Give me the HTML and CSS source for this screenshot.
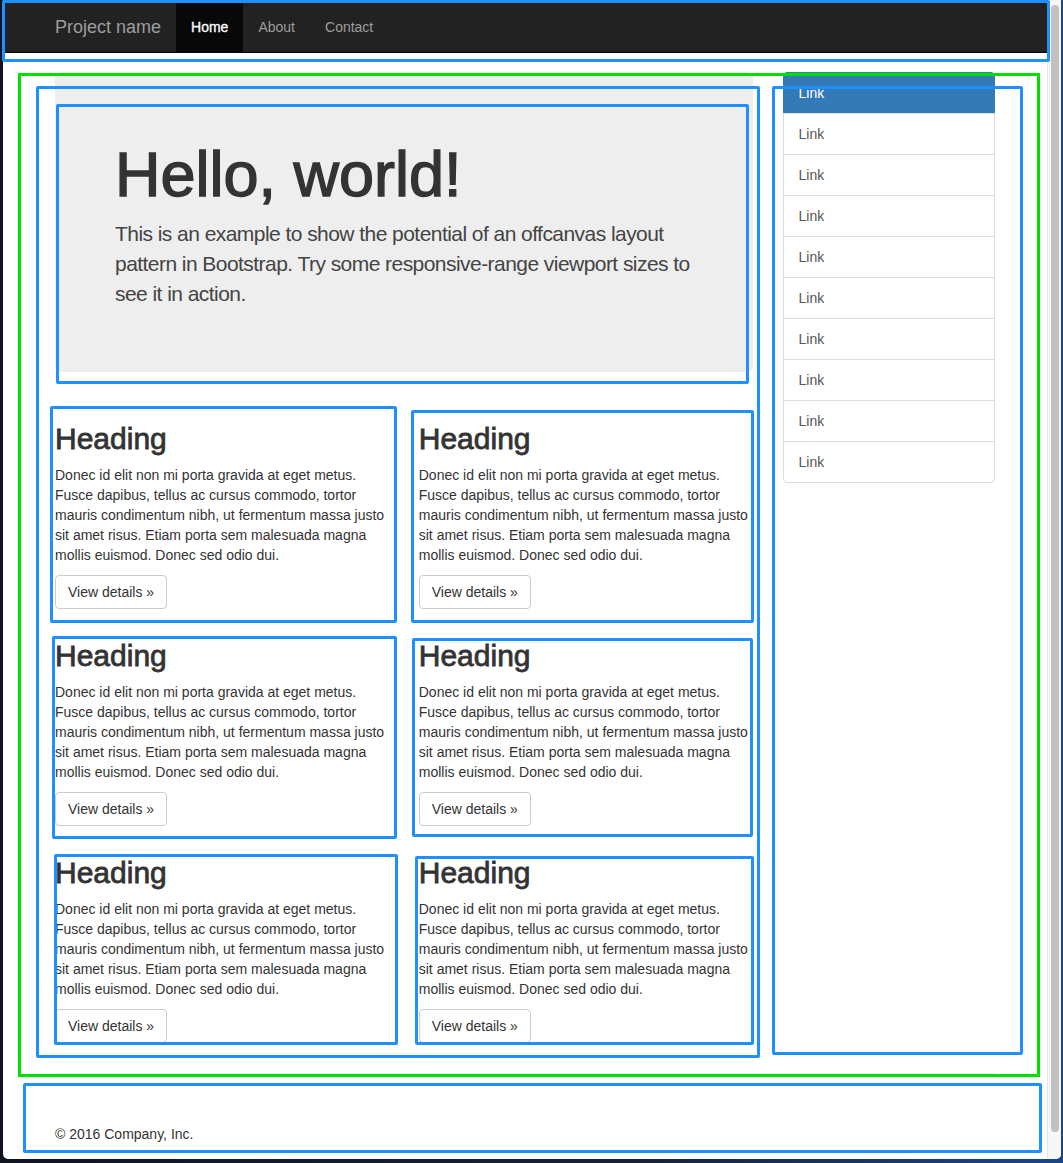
FILE: index.html
```html
<!DOCTYPE html>
<html lang="en">
<head>
<meta charset="utf-8">
<title>Off Canvas Template for Bootstrap</title>
<link rel="stylesheet" href="styles.css">
</head>
<body>
<div class="screen">
  <div class="window">
    <div class="viewport">
      <nav class="navbar">
        <div class="container nav-inner">
          <a class="brand" href="#">Project name</a>
          <ul class="nav">
            <li class="active"><a href="#">Home</a></li>
            <li><a href="#">About</a></li>
            <li><a href="#">Contact</a></li>
          </ul>
        </div>
      </nav>

      <div class="container main">
        <div class="row">
          <div class="col-main">
            <div class="jumbotron">
              <h1>Hello, world!</h1>
              <p>This is an example to show the potential of an offcanvas layout pattern in Bootstrap. Try some responsive-range viewport sizes to see it in action.</p>
            </div>
            <div class="cards">
              <div class="card">
                <h2>Heading</h2>
                <p>Donec id elit non mi porta gravida at eget metus. Fusce dapibus, tellus ac cursus commodo, tortor mauris condimentum nibh, ut fermentum massa justo sit amet risus. Etiam porta sem malesuada magna mollis euismod. Donec sed odio dui.</p>
                <p><a class="btn" href="#">View details &raquo;</a></p>
              </div>
              <div class="card">
                <h2>Heading</h2>
                <p>Donec id elit non mi porta gravida at eget metus. Fusce dapibus, tellus ac cursus commodo, tortor mauris condimentum nibh, ut fermentum massa justo sit amet risus. Etiam porta sem malesuada magna mollis euismod. Donec sed odio dui.</p>
                <p><a class="btn" href="#">View details &raquo;</a></p>
              </div>
              <div class="card">
                <h2>Heading</h2>
                <p>Donec id elit non mi porta gravida at eget metus. Fusce dapibus, tellus ac cursus commodo, tortor mauris condimentum nibh, ut fermentum massa justo sit amet risus. Etiam porta sem malesuada magna mollis euismod. Donec sed odio dui.</p>
                <p><a class="btn" href="#">View details &raquo;</a></p>
              </div>
              <div class="card">
                <h2>Heading</h2>
                <p>Donec id elit non mi porta gravida at eget metus. Fusce dapibus, tellus ac cursus commodo, tortor mauris condimentum nibh, ut fermentum massa justo sit amet risus. Etiam porta sem malesuada magna mollis euismod. Donec sed odio dui.</p>
                <p><a class="btn" href="#">View details &raquo;</a></p>
              </div>
              <div class="card">
                <h2>Heading</h2>
                <p>Donec id elit non mi porta gravida at eget metus. Fusce dapibus, tellus ac cursus commodo, tortor mauris condimentum nibh, ut fermentum massa justo sit amet risus. Etiam porta sem malesuada magna mollis euismod. Donec sed odio dui.</p>
                <p><a class="btn" href="#">View details &raquo;</a></p>
              </div>
              <div class="card">
                <h2>Heading</h2>
                <p>Donec id elit non mi porta gravida at eget metus. Fusce dapibus, tellus ac cursus commodo, tortor mauris condimentum nibh, ut fermentum massa justo sit amet risus. Etiam porta sem malesuada magna mollis euismod. Donec sed odio dui.</p>
                <p><a class="btn" href="#">View details &raquo;</a></p>
              </div>
            </div>
          </div>
          <div class="col-side">
            <div class="list-group">
              <a href="#" class="item active">Link</a>
              <a href="#" class="item">Link</a>
              <a href="#" class="item">Link</a>
              <a href="#" class="item">Link</a>
              <a href="#" class="item">Link</a>
              <a href="#" class="item">Link</a>
              <a href="#" class="item">Link</a>
              <a href="#" class="item">Link</a>
              <a href="#" class="item">Link</a>
              <a href="#" class="item">Link</a>
            </div>
          </div>
        </div>
        <hr>
        <footer class="footer">
          <p>&copy; 2016 Company, Inc.</p>
        </footer>
      </div>
    </div>
    <div class="scrollbar"><div class="thumb"></div></div>
  </div>

  <div class="overlay">
    <div class="box blue b-nav"></div>
    <div class="box green g-main"></div>
    <div class="box blue b-col"></div>
    <div class="box blue b-jumbo"></div>
    <div class="box blue b-side"></div>
    <div class="box blue b-c1"></div>
    <div class="box blue b-c2"></div>
    <div class="box blue b-c3"></div>
    <div class="box blue b-c4"></div>
    <div class="box blue b-c5"></div>
    <div class="box blue b-c6"></div>
    <div class="box blue b-foot"></div>
  </div>
</div>
</body>
</html>
```

FILE: styles.css
```css
* { box-sizing: border-box; }

html, body {
  margin: 0;
  padding: 0;
  width: 1063px;
  height: 1163px;
  overflow: hidden;
}

body {
  background: #111a2b;
  font-family: "Liberation Sans", Arial, Helvetica, sans-serif;
  font-size: 14px;
  line-height: 20px;
  color: #333;
}

.screen {
  position: relative;
  width: 1063px;
  height: 1163px;
  padding: 0 2px 0 3px;
  background: linear-gradient(90deg, #0e1422 0%, #16223a 60%, #1c4686 100%);
}

.window {
  display: flex;
  height: 1159px;
  background: #fff;
  border-radius: 0 0 5px 5px;
  overflow: hidden;
}

.viewport {
  width: 1044px;
  padding-top: 2px;
  overflow: hidden;
}

/* navbar */
.navbar {
  height: 51px;
  background: #222;
  border-bottom: 1px solid #080808;
}

.container {
  width: 970px;
  margin: 0 auto;
  padding: 0 15px;
}

.nav-inner { display: flex; }

.brand {
  display: block;
  height: 50px;
  padding: 15px;
  margin-left: -15px;
  font-size: 18px;
  line-height: 20px;
  color: #9d9d9d;
  text-decoration: none;
}

.nav {
  display: flex;
  list-style: none;
  margin: 0;
  padding: 0;
}

.nav a {
  display: block;
  padding: 15px;
  line-height: 20px;
  color: #9d9d9d;
  text-decoration: none;
}

.nav .active a {
  background: #080808;
  color: #fff;
  -webkit-text-stroke: 0.3px #fff;
}

/* main */
.main { padding-top: 19px; }

.row {
  display: flex;
  margin: 0 -15px;
}

.col-main {
  width: 727.5px;
  padding: 0 15px;
}

.col-side {
  width: 242.5px;
  padding: 0 15px;
}

.jumbotron {
  background: #eee;
  padding: 48px 60px;
  margin-bottom: 30px;
  border-radius: 6px;
}

.jumbotron h1 {
  margin: 20px 0 10px;
  font-size: 63px;
  line-height: 69px;
  font-weight: 400;
  -webkit-text-stroke: 1.4px #333;
  color: #333;
}

.jumbotron p {
  margin: 0 0 15px;
  font-size: 21px;
  line-height: 30px;
  font-weight: 300;
  letter-spacing: -0.55px;
  color: #444;
}

.cards {
  display: grid;
  grid-template-columns: 1fr 1fr;
  margin: 0 -15px;
}

.card { padding: 0 15px; }

.card h2 {
  margin: 20px 0 10px;
  font-size: 30px;
  line-height: 33px;
  font-weight: 400;
  -webkit-text-stroke: 0.8px #333;
  color: #333;
}

.card p { margin: 0 0 10px; }

.btn {
  display: inline-block;
  padding: 6px 12px;
  font-size: 14px;
  line-height: 20px;
  color: #333;
  background: #fff;
  border: 1px solid #ccc;
  border-radius: 4px;
  text-decoration: none;
}

/* sidebar */
.list-group {
  margin-bottom: 20px;
}

.item {
  display: block;
  padding: 10px 15px;
  margin-bottom: -1px;
  background: #fff;
  border: 1px solid #ddd;
  color: #555;
  text-decoration: none;
  line-height: 20px;
}

.item:first-child { border-radius: 4px 4px 0 0; }
.item:last-child { border-radius: 0 0 4px 4px; margin-bottom: 0; }

.item.active {
  background: #337ab7;
  border-color: #337ab7;
  color: #fff;
}

hr {
  margin: 20px 0;
  border: 0;
  border-top: 1px solid #eee;
}

.footer { padding: 30px 0; }
.footer p { margin: 0 0 10px; }

/* scrollbar */
.scrollbar {
  width: 14px;
  background: #f7f7f7;
  border-left: 1px solid #e6e6e6;
  padding: 5px 2px 0 3px;
}

.thumb {
  width: 8px;
  height: 1127px;
  background: #c1c1c1;
  border-radius: 4px;
}

/* debug outline overlay */
.overlay {
  position: absolute;
  inset: 0;
  pointer-events: none;
}

.box {
  position: absolute;
  border-radius: 2px;
}

.blue { border: 3px solid #1e90ff; }
.green { border: 3px solid #00e000; border-radius: 0; }

.b-nav   { left: 2px;   top: 0;      width: 1048px; height: 62px; }
.g-main  { left: 18px;  top: 73px;   width: 1022px; height: 1004px; }
.b-col   { left: 36px;  top: 86px;   width: 724px;  height: 972px; }
.b-jumbo { left: 56px;  top: 104px;  width: 693px;  height: 280px; }
.b-side  { left: 772px; top: 86px;   width: 251px;  height: 969px; }
.b-c1    { left: 50px;  top: 406px;  width: 347px;  height: 217px; }
.b-c2    { left: 411px; top: 410px;  width: 343px;  height: 213px; }
.b-c3    { left: 52px;  top: 636px;  width: 345px;  height: 203px; }
.b-c4    { left: 412px; top: 638px;  width: 341px;  height: 199px; }
.b-c5    { left: 54px;  top: 854px;  width: 344px;  height: 191px; }
.b-c6    { left: 415px; top: 856px;  width: 339px;  height: 189px; }
.b-foot  { left: 23px;  top: 1083px; width: 1019px; height: 70px; }
```
